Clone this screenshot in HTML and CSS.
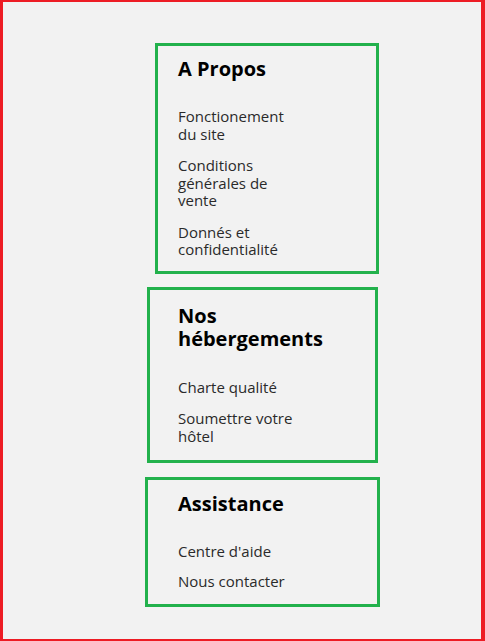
FILE: index.html
```html
<!DOCTYPE html>
<html lang="fr">
<head>
<meta charset="utf-8">
<title>Footer</title>
<link rel="stylesheet" href="styles.css">
</head>
<body>
<div class="page">
  <section class="box box--apropos">
    <h2 class="box__title">A Propos</h2>
    <ul class="box__list">
      <li><a href="#">Fonctionement du site</a></li>
      <li><a href="#">Conditions générales de vente</a></li>
      <li><a href="#">Donnés et confidentialité</a></li>
    </ul>
  </section>
  <section class="box box--heberg">
    <h2 class="box__title">Nos hébergements</h2>
    <ul class="box__list">
      <li><a href="#">Charte qualité</a></li>
      <li><a href="#">Soumettre votre hôtel</a></li>
    </ul>
  </section>
  <section class="box box--assist">
    <h2 class="box__title">Assistance</h2>
    <ul class="box__list">
      <li><a href="#">Centre d'aide</a></li>
      <li><a href="#">Nous contacter</a></li>
    </ul>
  </section>
</div>
</body>
</html>
```
FILE: styles.css
```css
* { box-sizing: border-box; }
html, body { margin: 0; padding: 0; }
body {
  background: #f2f2f2;
  font-family: "Open Sans", "Noto Sans", sans-serif;
}
.page {
  width: 485px;
  height: 641px;
  border-style: solid;
  border-color: #ed1c24;
  border-width: 2px 4px 2px 3px;
  background: #f2f2f2;
  display: flex;
  flex-direction: column;
  align-items: flex-start;
  padding-top: 41px;
  gap: 13px;
}
.box {
  border: 3px solid #22b14c;
  padding: 11px 20px 14px 20px;
}
.box--apropos { margin-left: 152px; width: 224px; padding-bottom: 12px; }
.box--heberg { margin-left: 144px; width: 231px; padding-left: 28px; padding-top: 14px; padding-bottom: 15px; }
.box--assist { margin-left: 142px; width: 235px; padding-left: 30px; margin-top: 1px; padding-top: 12px; padding-bottom: 13px; }
.box__title {
  margin: 0 0 28px 0;
  font-size: 20px;
  line-height: 23.4px;
  font-weight: 700;
  color: #000;
  width: 150px;
}
.box--assist .box__title { margin-bottom: 27px; }
.box__list {
  list-style: none;
  margin: 0;
  padding: 0;
  display: flex;
  flex-direction: column;
  gap: 14px;
  width: 125px;
}
.box--assist .box__list { gap: 13px; }
.box__list a {
  display: block;
  color: #2a2a2a;
  text-decoration: none;
  font-size: 15px;
  line-height: 17.5px;
}
```
